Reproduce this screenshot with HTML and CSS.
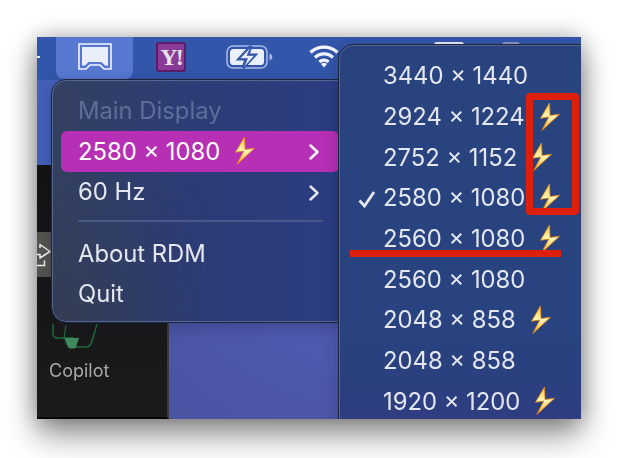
FILE: index.html
```html
<!DOCTYPE html>
<html lang="en">
<head>
<meta charset="utf-8">
<title>RDM menu</title>
<link rel="stylesheet" href="styles.css">
</head>
<body>
<svg class="defs" width="0" height="0" aria-hidden="true">
  <defs>
    <linearGradient id="boltFill" x1="0" y1="0" x2="0" y2="1">
      <stop offset="0" stop-color="#ffc93a"/>
      <stop offset="0.5" stop-color="#fff6b8"/>
      <stop offset="1" stop-color="#ffb01f"/>
    </linearGradient>
    <symbol id="bolt" viewBox="0 0 22 30">
      <path d="M10.500 1 1.500 16.300 9.800 15 2.800 28.500 20.500 12.300 11 13.500z" fill="url(#boltFill)" stroke="#e98612" stroke-width=".8" stroke-linejoin="round"/>
    </symbol>
    <symbol id="chev" viewBox="0 0 12 16">
      <path d="M2.500 1.500 9.500 8l-7 6.500" fill="none" stroke="currentColor" stroke-width="2.400" stroke-linecap="round" stroke-linejoin="round"/>
    </symbol>
  </defs>
</svg>
<main class="window">
  <header class="menubar">
    <span class="dash"></span>
    <div class="tile">
      <svg class="monitor" viewBox="0 0 34 27" aria-hidden="true">
        <path d="M1 1h32v25h-7l-4-4H12l-4 4H1z" fill="none" stroke="#f2f5fd" stroke-width="1.600"/>
        <path d="M4 4h26v18.500h-3L23.500 19h-13L7 22.500H4z" fill="#e9edf9"/>
      </svg>
    </div>
    <div class="yahoo"><span>Y!</span></div>
    <svg class="battery" viewBox="0 0 47 24" aria-hidden="true">
      <rect x="1" y="1" width="40" height="22" rx="6" fill="none" stroke="#a9bbe6" stroke-width="1.500"/>
      <rect x="4" y="4" width="34" height="16" rx="3.500" fill="#eaf0fb"/>
      <path d="M43.500 8.500c2 .8 2.800 2 2.800 3.500s-.8 2.700-2.800 3.500z" fill="#a9bbe6"/>
      <path d="M25 1 13 14h7l-3 9 12-13h-7z" fill="#3356a8" stroke="#3356a8" stroke-width="3"/>
      <path d="M24.500 2.500 14 13.500h7.500L18 22l10.500-11.500H21z" fill="#eaf0fb" stroke="#3356a8" stroke-width=".6"/>
    </svg>
    <svg class="wifi" viewBox="0 0 32 24" aria-hidden="true">
      <path d="M2.500 8.500a19.500 19.500 0 0 1 27 0M7 13.500a13 13 0 0 1 18 0M11.500 18a6.500 6.500 0 0 1 9 0" fill="none" stroke="#f2f5fd" stroke-width="3.300"/>
      <path d="M16 23.500l-3-3.500a4.500 4.500 0 0 1 6 0z" fill="#f2f5fd"/>
    </svg>
    <span class="sliver sliver-white"></span>
    <span class="sliver sliver-gray"></span>
  </header>
  <div class="desk">
    <aside class="sidebar">
      <div class="share">
        <svg viewBox="0 0 15 26" aria-hidden="true">
          <path d="M3 7V3.500L13 10.500 3 17V13.500H0" fill="none" stroke="#f0f0f0" stroke-width="1.500" stroke-linejoin="round"/>
          <path d="M0 24.500h7.500V20" fill="none" stroke="#f0f0f0" stroke-width="1.500" stroke-linecap="round"/>
        </svg>
      </div>
      <svg class="copilot" viewBox="0 0 60 30" aria-hidden="true">
        <path d="M1 2v10c0 3 2 4 5 4h7c1 6 3 9 6 9h15c3 0 5-2 6-6l5-17" fill="none" stroke="#1f6b3c" stroke-width="1.500"/>
        <path d="M14 3l-2 13h9l-4 9" fill="none" stroke="#1f6b3c" stroke-width="1.300"/>
        <path d="M13 16h14l-3 9c-1 2-7 2-8 0z" fill="#3f8a5d"/>
      </svg>
      <span class="copilot-label">Copilot</span>
    </aside>
    <div class="wall"></div>
  </div>

  <nav class="menu main-menu">
    <div class="row muted">Main Display</div>
    <div class="row active"><span>2580 × 1080</span><svg class="bolt"><use href="#bolt"/></svg><svg class="chev"><use href="#chev"/></svg></div>
    <div class="row"><span>60 Hz</span><svg class="chev"><use href="#chev"/></svg></div>
    <hr class="sep">
    <div class="row">About RDM</div>
    <div class="row">Quit</div>
  </nav>

  <nav class="menu sub-menu">
    <div class="sub-row">3440 × 1440</div>
    <div class="sub-row">2924 × 1224<svg class="bolt"><use href="#bolt"/></svg></div>
    <div class="sub-row">2752 × 1152<svg class="bolt"><use href="#bolt"/></svg></div>
    <div class="sub-row">
      <svg class="check" viewBox="0 0 18 18" aria-hidden="true"><path d="M1.500 10.500 6.500 16 16 2" fill="none" stroke="#e4e7f0" stroke-width="2.800"/></svg>2580 × 1080<svg class="bolt"><use href="#bolt"/></svg>
    </div>
    <div class="sub-row">2560 × 1080<svg class="bolt"><use href="#bolt"/></svg></div>
    <div class="sub-row">2560 × 1080</div>
    <div class="sub-row">2048 × 858<svg class="bolt"><use href="#bolt"/></svg></div>
    <div class="sub-row">2048 × 858</div>
    <div class="sub-row">1920 × 1200<svg class="bolt"><use href="#bolt"/></svg></div>
  </nav>

  <div class="mark-box"></div>
  <div class="mark-line"></div>
</main>
</body>
</html>
```
FILE: styles.css
```css
* { box-sizing: border-box; }
html, body { margin: 0; height: 100%; background: #fff; overflow: hidden; }
body { padding: 37px 37px 0; font-family: Inter, "Liberation Sans", sans-serif; }
.defs { position: absolute; }

.window {
  position: relative;
  width: 544px;
  height: 382px;
  overflow: hidden;
  display: flex;
  flex-direction: column;
  background: #1a1a1a;
  box-shadow: 0 16px 30px rgba(0, 0, 0, .42), 0 0 22px rgba(0, 0, 0, .28);
  filter: blur(.35px);
}

.menubar {
  position: relative;
  height: 43px;
  flex: none;
  display: flex;
  align-items: flex-start;
  background: linear-gradient(90deg, #3256a9, #3457ab);
}
.dash { width: 3px; height: 2px; margin: 19px 16px 0 0; background: #e8edf8; }
.tile {
  width: 77px;
  height: 42px;
  flex: none;
  display: flex;
  justify-content: center;
  padding-top: 6px;
  background: #5678d0;
  border-radius: 0 0 8px 8px;
}
.monitor { width: 34px; height: 27px; }
.yahoo {
  width: 30px;
  height: 30px;
  flex: none;
  margin: 5px 0 0 23px;
  display: flex;
  align-items: center;
  justify-content: center;
  background: #8a3b98;
  border: 2px solid #5b1d68;
  border-radius: 3px;
}
.yahoo span {
  font: bold 24px/1 "Liberation Serif", serif;
  color: #e9e3e9;
  letter-spacing: -2px;
}
.battery { width: 47px; height: 24px; flex: none; margin: 8px 0 0 40px; }
.wifi { width: 32px; height: 24px; flex: none; margin: 7px 0 0 35px; }
.sliver { position: absolute; top: 5px; height: 3px; border-radius: 3px 3px 0 0; }
.sliver-white { left: 397px; width: 30px; background: #e8edf8; }
.sliver-gray { left: 465px; width: 18px; background: #8b9ac4; }

.desk { flex: 1; display: flex; min-height: 0; }
.sidebar {
  width: 132px;
  flex: none;
  display: flex;
  flex-direction: column;
  background: linear-gradient(180deg, #4560b8 0, #4560b8 85px, #141414 85px, #1b1b1b 100%);
  border-right: 2px solid #3a3a3a;
  border-bottom: 2px solid #050505;
}
.share {
  width: 15px;
  height: 45px;
  margin-top: 152px;
  padding-top: 9px;
  background: #55544f;
}
.share svg { display: block; width: 15px; height: 26px; }
.copilot { width: 60px; height: 30px; margin: 45px 0 0 15px; flex: none; }
.copilot-label {
  margin: 8px 0 0 12px;
  font-size: 18px;
  line-height: 22px;
  color: #a9a9a9;
}
.wall {
  flex: 1;
  background: radial-gradient(ellipse at 45% 55%, #4f5aae 30%, #49509e 100%);
}

.menu {
  position: absolute;
  color: #e4e7f0;
  font-size: 23.800px;
  border: 1px solid #56678f;
  outline: 1px solid #1c2540;
  box-shadow: 0 4px 16px rgba(20, 20, 60, .3);
}
.main-menu {
  left: 15px;
  top: 43px;
  width: 288px;
  height: 242px;
  padding: 9.500px 0 0 8px;
  border-radius: 14px 0 0 14px;
  background: linear-gradient(90deg, #33405f 0, #2d3c75 45%, #2b3d82 100%);
}
.main-menu::before {
  content: "";
  position: absolute;
  inset: 0;
  border-radius: inherit;
  background: linear-gradient(180deg, rgba(52, 60, 72, 0) 40%, rgba(52, 60, 72, .5) 100%);
  mask-image: linear-gradient(90deg, #000, transparent 55%);
  pointer-events: none;
}
.row {
  position: relative;
  height: 40.500px;
  display: flex;
  align-items: center;
  padding: 0 17px;
  border-radius: 6px;
}
.muted { color: #5d6e98; }
.active { background: #b72fb5; color: #fff; }
.row .chev { position: absolute; left: 247px; top: 13px; width: 12px; height: 16px; }
.sep {
  position: relative;
  height: 2px;
  margin: 8px 16px 11px 17px;
  border: 0;
  background: #4b5788;
}

.sub-menu {
  left: 302px;
  top: 8px;
  width: 250px;
  height: 390px;
  padding: 9.500px 0 0 43px;
  border-radius: 14px 0 0 0;
  background: linear-gradient(180deg, #29437f 0, #28437f 75%, #2f3c80 100%);
}
.sub-row {
  position: relative;
  height: 40.700px;
  display: flex;
  align-items: center;
}
.bolt { width: 22px; height: 30px; flex: none; margin-left: 14px; }
.check { position: absolute; left: -25px; top: 12px; width: 18px; height: 18px; }

.mark-box {
  position: absolute;
  left: 489px;
  top: 56px;
  width: 53px;
  height: 122px;
  border: 7.500px solid #dd1f0c;
  border-radius: 4px;
}
.mark-line {
  position: absolute;
  left: 313px;
  top: 212.500px;
  width: 211px;
  height: 7.500px;
  background: #dd1f0c;
}
```
